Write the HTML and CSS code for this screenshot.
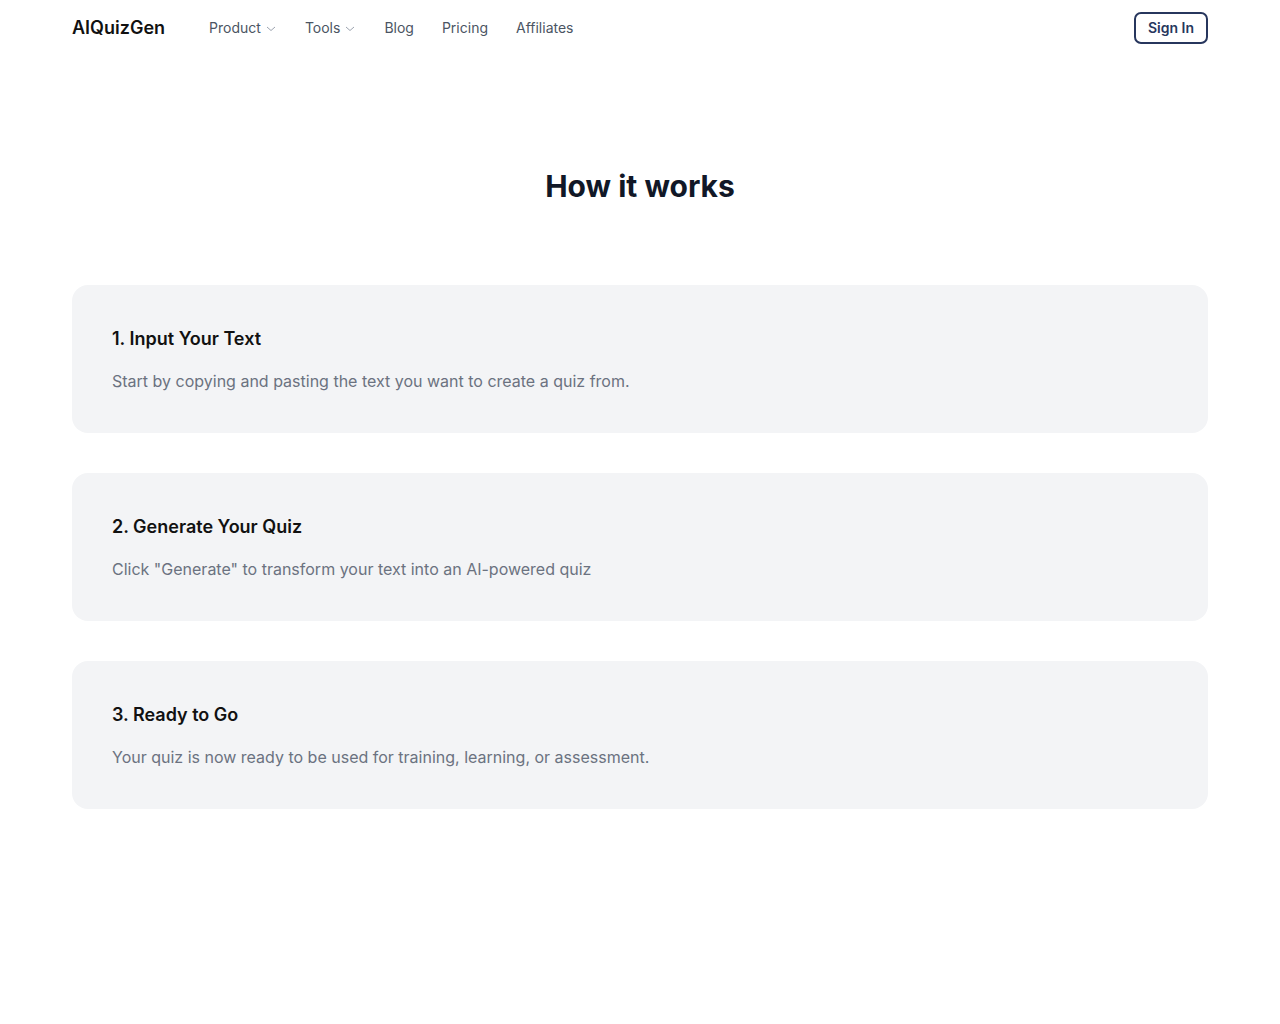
FILE: index.html
```html
<!DOCTYPE html>
<html lang="en">

<head>
    <meta charset="UTF-8">
    <meta name="viewport" content="width=device-width, initial-scale=1.0">
    <title>AIQuizGen - How it works</title>
    <link rel="stylesheet" href="styles.css">
</head>

<body>

    <header class="nav">
        <div class="nav-left">
            <a class="logo" href="#">AIQuizGen</a>
            <nav class="nav-links">
                <a href="#">Product
                    <svg class="chev" width="12" height="12" viewBox="0 0 12 12"><path d="M2 5l4 3.5L10 5" fill="none" stroke="currentColor" stroke-width="1"/></svg>
                </a>
                <a href="#">Tools
                    <svg class="chev" width="12" height="12" viewBox="0 0 12 12"><path d="M2 5l4 3.5L10 5" fill="none" stroke="currentColor" stroke-width="1"/></svg>
                </a>
                <a href="#">Blog</a>
                <a href="#">Pricing</a>
                <a href="#">Affiliates</a>
            </nav>
        </div>
        <a class="sign-in" href="#">Sign In</a>
    </header>

    <main class="main">
        <h1 class="title">How it works</h1>

        <div class="steps">
            <div class="step">
                <h3>1. Input Your Text</h3>
                <p>Start by copying and pasting the text you want to create a quiz from.</p>
            </div>
            <div class="step">
                <h3>2. Generate Your Quiz</h3>
                <p>Click "Generate" to transform your text into an AI-powered quiz</p>
            </div>
            <div class="step">
                <h3>3. Ready to Go</h3>
                <p>Your quiz is now ready to be used for training, learning, or assessment.</p>
            </div>
        </div>
    </main>

</body>

</html>
```

FILE: styles.css
```css
body {
    font-family: Inter, "Noto Sans", sans-serif;
    margin: 0;
    padding: 0;
    background-color: #fff;
    color: #111827;
}

a {
    text-decoration: none;
}

.nav {
    display: flex;
    justify-content: space-between;
    align-items: center;
    height: 56px;
    padding: 0 72px;
}

.nav-left {
    display: flex;
    align-items: center;
    margin-bottom: 2px;
}

.logo {
    font-size: 18px;
    font-weight: 600;
    color: #111;
    margin-right: 44px;
}

.nav-links {
    display: flex;
    align-items: center;
    gap: 28px;
}

.nav-links a {
    font-size: 14px;
    color: #4b5563;
    display: flex;
    align-items: center;
    gap: 4px;
}

.chev {
    color: #9ca3af;
    margin-top: 2px;
}

.sign-in {
    display: inline-block;
    box-sizing: border-box;
    height: 32px;
    line-height: 28px;
    padding: 0 12px;
    border: 2px solid #27365d;
    border-radius: 7px;
    font-size: 14px;
    font-weight: 600;
    color: #27365d;
}

.main {
    padding: 112px 72px 0;
}

.title {
    margin: 0;
    text-align: center;
    font-size: 30px;
    line-height: 36px;
    font-weight: 700;
    color: #111827;
}

.steps {
    margin-top: 81px;
    display: flex;
    flex-direction: column;
    gap: 40px;
}

.step {
    background-color: #f3f4f6;
    border-radius: 16px;
    padding: 40px;
}

.step h3 {
    margin: 0;
    font-size: 18px;
    line-height: 28px;
    font-weight: 600;
    color: #111;
}

.step p {
    margin: 16px 0 0;
    font-size: 16px;
    line-height: 24px;
    color: #6b7280;
}
```
